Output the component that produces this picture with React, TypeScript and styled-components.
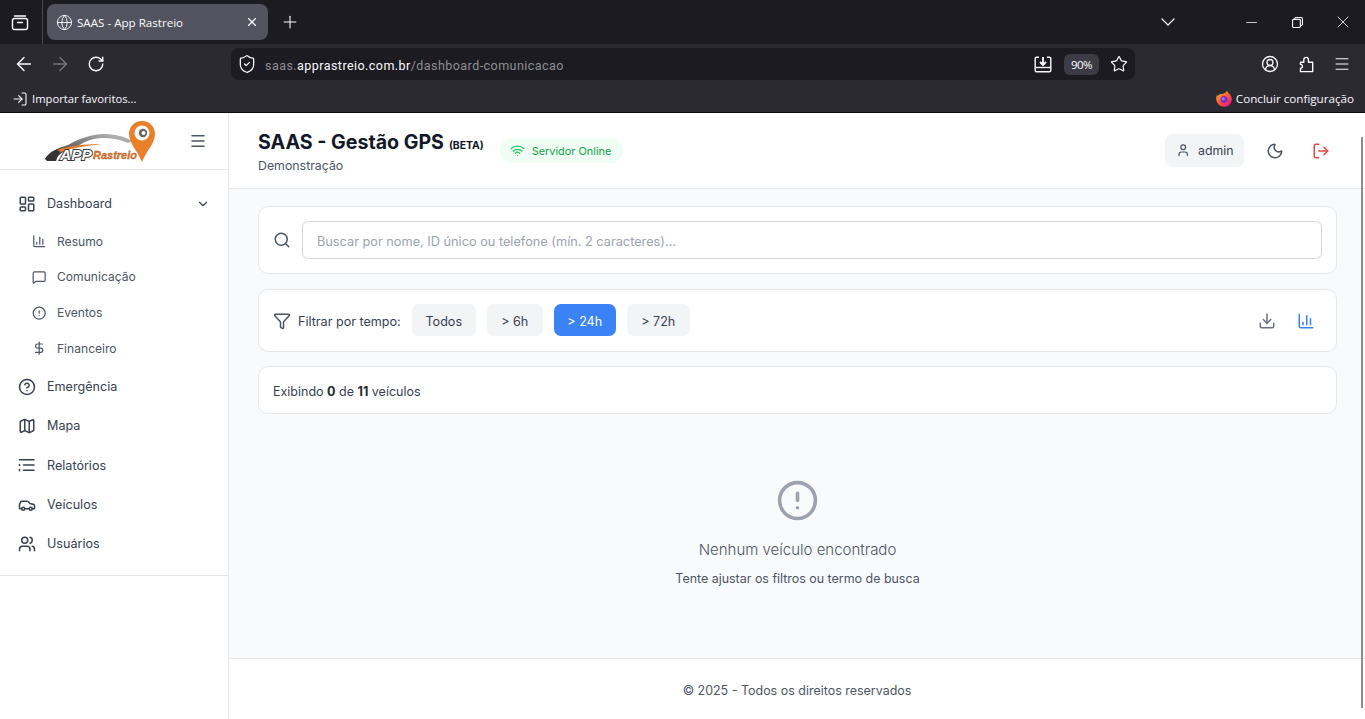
import React from "react";
import styled, { createGlobalStyle } from "styled-components";
import {
  ArrowLeft, ArrowRight, RotateCw, Globe, X, Plus, ChevronDown, Minus, Star, Menu,
  LayoutDashboard, ChartColumn, MessageSquare, CircleAlert, DollarSign, CircleHelp,
  Map as MapIcon, Car, Users, User, Moon, LogOut, Search, Funnel, Download, Wifi,
  CircleUserRound, LogIn, ShieldCheck,
} from "lucide-react";

const Global = createGlobalStyle`
  html, body { margin: 0; padding: 0; height: 100%; overflow: hidden; }
  body { font-family: Inter, "Liberation Sans", sans-serif; background: #fff; }
  * { box-sizing: border-box; }
`;

const Window = styled.div`
  width: 1365px;
  height: 719px;
  display: flex;
  flex-direction: column;
  position: relative;
  overflow: hidden;
`;

/* ---------- browser chrome ---------- */
const TabStrip = styled.div`
  height: 44px;
  background: #1c1b22;
  display: flex;
  align-items: center;
  color: #fbfbfe;
`;
const ViewSlot = styled.div`
  width: 43px;
  height: 44px;
  display: flex;
  align-items: center;
  justify-content: center;
  border-right: 1px solid #4a4a52;
  padding-right: 3px;
`;
const Tab = styled.div`
  width: 221px;
  height: 36px;
  margin-left: 4px;
  background: #53535f;
  border-radius: 8px;
  display: flex;
  align-items: center;
  padding: 0 9px 0 9px;
  gap: 4px;
  font: 11.6px "Open Sans", sans-serif;
  color: #fbfbfe;
`;
const TabTitle = styled.span`
  flex: 1;
`;
const NewTab = styled.div`
  width: 44px;
  display: flex;
  justify-content: center;
`;
const StripSpacer = styled.div`
  flex: 1;
`;
const WindowButton = styled.div<{ $w: number }>`
  width: ${(p) => p.$w}px;
  display: flex;
  justify-content: center;
  align-items: center;
`;
const NavBar = styled.div`
  height: 41px;
  background: #2b2a33;
  display: flex;
  align-items: center;
  color: #fbfbfe;
  padding: 0 0 1px 6px;
`;
const NavButton = styled.div<{ $dim?: boolean }>`
  width: 36px;
  display: flex;
  justify-content: center;
  color: ${(p) => (p.$dim ? "#77767c" : "#fbfbfe")};
`;
const UrlBar = styled.div`
  width: 904px;
  height: 32px;
  margin: 0 117px;
  background: #1c1b22;
  border-radius: 8px;
  display: flex;
  align-items: center;
  padding: 0 7px 0 6px;
  font: 12.5px Roboto, sans-serif;
  letter-spacing: 0.45px;
  color: #8f8f93;
`;
const UrlText = styled.div`
  flex: 1;
  margin-left: 8px;
  padding-top: 3px;
`;
const UrlHost = styled.span`
  color: #fbfbfe;
`;
const ZoomPill = styled.div`
  width: 35px;
  height: 21px;
  margin: 0 11px 0 12px;
  border-radius: 6px;
  background: #3d3c46;
  color: #fbfbfe;
  font: 11.5px "Open Sans", sans-serif;
  letter-spacing: -0.6px;
  display: flex;
  align-items: center;
  justify-content: center;
`;
const BookmarkBar = styled.div`
  height: 27px;
  background: #2b2a33;
  display: flex;
  align-items: center;
  justify-content: space-between;
  padding: 0 11px 0 12px;
  color: #fbfbfe;
`;
const Bookmark = styled.div<{ $size: number; $gap: number }>`
  display: flex;
  align-items: center;
  gap: ${(p) => p.$gap}px;
  font: ${(p) => p.$size}px "Open Sans", sans-serif;
`;
const ChromeEdge = styled.div`
  height: 1px;
  background: #0c0c0d;
`;

/* ---------- application ---------- */
const App_ = styled.div`
  flex: 1;
  min-height: 0;
  display: flex;
  background: #fff;
`;
const Sidebar = styled.aside`
  width: 229px;
  flex: none;
  border-right: 1px solid #e5e7eb;
  background: #fff;
`;
const SidebarHead = styled.div`
  height: 57px;
  border-bottom: 1px solid #e5e7eb;
  display: flex;
  align-items: center;
  padding: 0 21px 0 42px;
  justify-content: space-between;
  color: #4b5563;
`;
const Nav = styled.nav`
  padding: 14px 0 11.8px;
  border-bottom: 1px solid #e5e7eb;
  display: flex;
  flex-direction: column;
`;
const NavItem = styled.div`
  height: 39.3px;
  padding: 0 18px;
  display: flex;
  align-items: center;
  gap: 11px;
  font-size: 12.6px;
  color: #374151;
  svg { flex: none; color: #374151; }
`;
const NavLabel = styled.span`
  flex: 1;
`;
const SubList = styled.div`
  display: flex;
  flex-direction: column;
  padding-bottom: 0.5px;
`;
const SubItem = styled.div`
  height: 35.8px;
  padding-left: 32px;
  display: flex;
  align-items: center;
  gap: 10.6px;
  font-size: 12.1px;
  color: #4b5563;
  svg { flex: none; color: #4b5563; }
`;
const Content = styled.div`
  flex: 1;
  min-width: 0;
  display: flex;
  flex-direction: column;
  background: #f9fafb;
`;
const Header = styled.header`
  height: 76px;
  flex: none;
  background: #fff;
  border-bottom: 1px solid #e5e7eb;
  display: flex;
  align-items: center;
  padding: 0 35px 0 29px;
`;
const TitleBlock = styled.div`
  display: flex;
  flex-direction: column;
  margin-top: 2px;
`;
const Title = styled.h1`
  margin: 0;
  font-size: 19.6px;
  line-height: 26px;
  font-weight: 700;
  color: #111827;
  white-space: nowrap;
`;
const Beta = styled.span`
  font-size: 10.4px;
  font-weight: 700;
  margin-left: 5px;
`;
const Subtitle = styled.div`
  margin-top: -1px;
  font-size: 12.35px;
  line-height: 16px;
  color: #4b5563;
`;
const OnlineBadge = styled.div`
  margin: 0 0 0 16px;
  height: 25px;
  padding: 0 12px 0 10px;
  border-radius: 13px;
  background: #f0fdf4;
  color: #16a34a;
  font-size: 10.9px;
  display: flex;
  align-items: center;
  gap: 7px;
  svg { color: #22c55e; }
`;
const HeaderSpacer = styled.div`
  flex: 1;
`;
const AdminChip = styled.div`
  height: 33px;
  width: 79px;
  border-radius: 8px;
  background: #f3f4f6;
  color: #374151;
  font-size: 12.3px;
  display: flex;
  align-items: center;
  padding-left: 11px;
  gap: 7.6px;
  svg { color: #4b5563; }
`;
const HeaderIcon = styled.div<{ $color: string; $ml: number }>`
  margin-left: ${(p) => p.$ml}px;
  color: ${(p) => p.$color};
  display: flex;
`;
const Main = styled.main`
  flex: 1;
  min-height: 0;
  padding: 17px 28px 0 29px;
  display: flex;
  flex-direction: column;
`;
const Card = styled.section`
  background: #fff;
  border: 1px solid #e5e7eb;
  border-radius: 10px;
  display: flex;
  align-items: center;
  flex: none;
`;
const SearchCard = styled(Card)`
  height: 68px;
  padding: 0 14px;
  gap: 11px;
  svg { color: #4b5563; flex: none; }
`;
const SearchInput = styled.input`
  flex: 1;
  height: 38px;
  border: 1px solid #d1d5db;
  border-radius: 6px;
  padding: 2px 14px 0;
  font: 12.74px Inter, sans-serif;
  background: #fff;
  &::placeholder { color: #9ca3af; opacity: 1; }
`;
const FilterCard = styled(Card)`
  height: 63px;
  margin-top: 15px;
  padding: 0 21px 0 14px;
`;
const FilterLabel = styled.span`
  font-size: 12.6px;
  color: #374151;
  margin: 1px 11px 0 7px;
`;
const FilterButton = styled.button<{ $active?: boolean; $w: number }>`
  width: ${(p) => p.$w}px;
  height: 32px;
  margin: 0 11px 1px 0;
  border: 0;
  border-radius: 7px;
  font: 12.6px Inter, sans-serif;
  background: ${(p) => (p.$active ? "#3b82f6" : "#f3f4f6")};
  color: ${(p) => (p.$active ? "#fff" : "#374151")};
  padding: 3px 0 0;
`;
const ActionIcon = styled.div<{ $color: string; $ml: number }>`
  color: ${(p) => p.$color};
  margin-left: ${(p) => p.$ml}px;
  display: flex;
`;
const CountCard = styled(Card)`
  height: 48px;
  margin-top: 14px;
  padding: 2px 14px 0;
  font-size: 12.5px;
  color: #374151;
  gap: 4px;
  b { font-weight: 700; color: #1f2937; }
`;
const Empty = styled.div`
  flex: 1;
  display: flex;
  flex-direction: column;
  align-items: center;
  padding-top: 65px;
  color: #9ca3af;
`;
const EmptyTitle = styled.div`
  margin-top: 17px;
  font-size: 15px;
  line-height: 22px;
  font-weight: 300;
  color: #4b5563;
`;
const EmptyHint = styled.div`
  margin-top: 10px;
  font-size: 12.45px;
  line-height: 16px;
  color: #4b5563;
`;
const Footer = styled.footer`
  height: 61px;
  flex: none;
  background: #fff;
  border-top: 1px solid #e5e7eb;
  display: flex;
  align-items: center;
  justify-content: center;
  padding-top: 2px;
  font-size: 12.47px;
  color: #4b5563;
`;
const ScrollThumb = styled.div`
  position: absolute;
  right: 2px;
  top: 137px;
  width: 2px;
  height: 571px;
  background: #8c8c8c;
`;

const ViewIcon = () => (
  <svg width="18" height="18" viewBox="0 0 18 18" fill="none" stroke="#fbfbfe" strokeWidth="1.4">
    <rect x="1.5" y="5.5" width="15" height="11" rx="2" />
    <path d="M3.5 3h11M6.5 9.5h5" strokeLinecap="round" />
  </svg>
);
const RestoreIcon = () => (
  <svg width="11" height="11" viewBox="0 0 12 12" fill="none" stroke="#fbfbfe" strokeWidth="1.2">
    <rect x="0.6" y="2.6" width="8.5" height="8.8" rx="1" />
    <path d="M3 2.5V1.6a1 1 0 0 1 1-1h6a1.5 1.5 0 0 1 1.4 1.5v6a1 1 0 0 1-1 1H9" />
  </svg>
);
const TrayDownload = () => (
  <svg width="18" height="17" viewBox="0 0 18 17" fill="none" stroke="#fbfbfe" strokeWidth="1.4">
    <path d="M5 1.2H2.5a1.3 1.3 0 0 0-1.3 1.3v12a1.3 1.3 0 0 0 1.3 1.3h13a1.3 1.3 0 0 0 1.3-1.3v-12a1.3 1.3 0 0 0-1.3-1.3H13" />
    <path d="M1.2 11.5h15.6" />
    <path d="M9 1v6.5M6 6l3 3 3-3" strokeWidth="1.8" />
  </svg>
);
const PuzzleIcon = () => (
  <svg width="17" height="17" viewBox="0 0 17 17" fill="none" stroke="#fbfbfe" strokeWidth="1.4" strokeLinejoin="round">
    <path d="M2.5 6.2H5.8V3.7a2.3 2.3 0 0 1 4.6 0V6.2H14.7V15.6H2.5V12.3a1.95 1.95 0 0 0 0-3.9Z" />
  </svg>
);
const FirefoxLogo = () => (
  <svg width="16" height="17" viewBox="0 0 16 17">
    <defs>
      <linearGradient id="ff" x1="0" y1="0" x2="0.8" y2="1">
        <stop offset="0" stopColor="#ffbd2e" />
        <stop offset="0.55" stopColor="#ff5a36" />
        <stop offset="1" stopColor="#e31587" />
      </linearGradient>
    </defs>
    <path d="M11 0.5c0.4 2 2 2.6 3.4 4.6 1.4 2 1.6 4 1.3 5.6A7.9 7.9 0 0 1 8 16.8 7.9 7.9 0 0 1 0.2 9c0-1.6 0.4-3.2 1-4.2l0.6 1.5C2.6 4.5 4 3.8 5.6 4c2-0.3 4.6-1.2 5.4-3.5z" fill="url(#ff)" />
    <circle cx="8" cy="9.5" r="3.6" fill="#7b2fc9" />
    <circle cx="7.2" cy="8.8" r="1.6" fill="#b56ae8" />
  </svg>
);
const ReportIcon = ({ size = 18 }: { size?: number; strokeWidth?: number }) => (
  <svg width={size} height={size} viewBox="0 0 18 18" fill="none" stroke="currentColor" strokeWidth="1.5" strokeLinecap="round">
    <path d="M1.5 3.7h14.5M5.5 9h10.5M5.5 14.2h10.5M1.5 8.6v1M1.5 13.4v1.4" />
  </svg>
);
const Logo = () => (
  <svg width="118" height="46" viewBox="0 0 118 46" style={{ marginTop: 2 }}>
    <defs>
      <linearGradient id="sw" x1="0" y1="1" x2="1" y2="0">
        <stop offset="0" stopColor="#2d2d2d" />
        <stop offset="0.5" stopColor="#777" />
        <stop offset="1" stopColor="#c4c4c4" />
      </linearGradient>
    </defs>
    <path d="M3 40 C8 32 16 29 26 26 C38 19 50 15 62 15 C72 15 82 17 90 22 L86 24 C78 20 68 19 60 19 C50 19 42 23 36 27 C28 29 18 33 13 41 Z" fill="url(#sw)" />
    <path d="M3 40 C7 34 12 31 19 29 L14 42 H5 Z" fill="#333" />
    <path d="M15 31 C26 27 42 25 60 25 C44 27 30 29 19 33 Z" fill="#e8792b" />
    <path d="M100 2 C92 2 87 8 87 15 C87 24 95 31 100 43 C105 31 113 24 113 15 C113 8 108 2 100 2 Z" fill="#e8802a" />
    <circle cx="100" cy="14" r="7.5" fill="#fff" />
    <circle cx="101" cy="14" r="4.2" fill="#666" />
    <circle cx="101.5" cy="14" r="2" fill="#fff" />
    <text x="18" y="41" fontFamily="Liberation Sans, sans-serif" fontSize="15.5" fontWeight="700" fontStyle="italic" fill="#fff" stroke="#3a3a3a" strokeWidth="2" paintOrder="stroke">APP</text>
    <text x="51" y="40" fontFamily="Liberation Sans, sans-serif" fontSize="11" fontWeight="700" fontStyle="italic" fill="#e8792b" stroke="#8a4a1a" strokeWidth="0.3">Rastreio</text>
  </svg>
);

const subItems = [
  { label: "Resumo", Icon: ChartColumn },
  { label: "Comunicação", Icon: MessageSquare },
  { label: "Eventos", Icon: CircleAlert },
  { label: "Financeiro", Icon: DollarSign },
];
const mainItems = [
  { label: "Emergência", Icon: CircleHelp },
  { label: "Mapa", Icon: MapIcon },
  { label: "Relatórios", Icon: ReportIcon },
  { label: "Veículos", Icon: Car },
  { label: "Usuários", Icon: Users },
];
const filters = [
  { label: "Todos", w: 64 },
  { label: "> 6h", w: 56 },
  { label: "> 24h", w: 62, active: true },
  { label: "> 72h", w: 63 },
];

export default function App() {
  return (
    <Window>
      <Global />
      <TabStrip>
        <ViewSlot><ViewIcon /></ViewSlot>
        <Tab>
          <Globe size={17} strokeWidth={1.3} />
          <TabTitle>SAAS - App Rastreio</TabTitle>
          <X size={14} strokeWidth={2} />
        </Tab>
        <NewTab><Plus size={20} strokeWidth={1.3} /></NewTab>
        <StripSpacer />
        <WindowButton $w={46}><ChevronDown size={24} strokeWidth={1.2} /></WindowButton>
        <WindowButton $w={37} />
        <WindowButton $w={46}><Minus size={17} strokeWidth={1.1} /></WindowButton>
        <WindowButton $w={46}><RestoreIcon /></WindowButton>
        <WindowButton $w={45}><X size={20} strokeWidth={1} /></WindowButton>
      </TabStrip>
      <NavBar>
        <NavButton><ArrowLeft size={22} strokeWidth={1.5} /></NavButton>
        <NavButton $dim><ArrowRight size={22} strokeWidth={1.5} /></NavButton>
        <NavButton><RotateCw size={18} strokeWidth={1.8} /></NavButton>
        <UrlBar>
          <ShieldCheck size={20} strokeWidth={1.5} color="#fbfbfe" />
          <UrlText>saas.<UrlHost>apprastreio.com.br</UrlHost>/dashboard-comunicacao</UrlText>
          <TrayDownload />
          <ZoomPill>90%</ZoomPill>
          <Star size={18} strokeWidth={1.6} color="#fbfbfe" />
        </UrlBar>
        <NavButton><CircleUserRound size={18} strokeWidth={1.7} /></NavButton>
        <NavButton><PuzzleIcon /></NavButton>
        <NavButton><Menu size={18} strokeWidth={1.4} /></NavButton>
      </NavBar>
      <BookmarkBar>
        <Bookmark $size={11.25} $gap={4}><LogIn size={16} strokeWidth={1.6} />Importar favoritos...</Bookmark>
        <Bookmark $size={11.65} $gap={4}><FirefoxLogo />Concluir configuração</Bookmark>
      </BookmarkBar>
      <ChromeEdge />
      <App_>
        <Sidebar>
          <SidebarHead>
            <Logo />
            <Menu size={18} strokeWidth={2} />
          </SidebarHead>
          <Nav>
            <NavItem>
              <LayoutDashboard size={18} />
              <NavLabel>Dashboard</NavLabel>
              <ChevronDown size={14} />
            </NavItem>
            <SubList>
              {subItems.map(({ label, Icon }) => (
                <SubItem key={label}>
                  <Icon size={14.4} />
                  {label}
                </SubItem>
              ))}
            </SubList>
            {mainItems.map(({ label, Icon }) => (
              <NavItem key={label}>
                <Icon size={18} />
                <NavLabel>{label}</NavLabel>
              </NavItem>
            ))}
          </Nav>
        </Sidebar>
        <Content>
          <Header>
            <TitleBlock>
              <Title>SAAS - Gestão GPS<Beta>(BETA)</Beta></Title>
              <Subtitle>Demonstração</Subtitle>
            </TitleBlock>
            <OnlineBadge><Wifi size={15} strokeWidth={2} />Servidor Online</OnlineBadge>
            <HeaderSpacer />
            <AdminChip><User size={14.4} />admin</AdminChip>
            <HeaderIcon $color="#4b5563" $ml={22}><Moon size={18} /></HeaderIcon>
            <HeaderIcon $color="#ef4444" $ml={28}><LogOut size={18} /></HeaderIcon>
          </Header>
          <Main>
            <SearchCard>
              <Search size={18} />
              <SearchInput placeholder="Buscar por nome, ID único ou telefone (mín. 2 caracteres)..." readOnly />
            </SearchCard>
            <FilterCard>
              <Funnel size={18} color="#4b5563" />
              <FilterLabel>Filtrar por tempo:</FilterLabel>
              {filters.map((f) => (
                <FilterButton key={f.label} $active={f.active} $w={f.w}>{f.label}</FilterButton>
              ))}
              <HeaderSpacer />
              <ActionIcon $color="#6b7280" $ml={0}><Download size={18} /></ActionIcon>
              <ActionIcon $color="#3b82f6" $ml={21}><ChartColumn size={18} /></ActionIcon>
            </FilterCard>
            <CountCard>
              <span>Exibindo <b>0</b> de <b>11</b> veículos</span>
            </CountCard>
            <Empty>
              <CircleAlert size={43} strokeWidth={2} />
              <EmptyTitle>Nenhum veículo encontrado</EmptyTitle>
              <EmptyHint>Tente ajustar os filtros ou termo de busca</EmptyHint>
            </Empty>
          </Main>
          <Footer>© 2025 - Todos os direitos reservados</Footer>
        </Content>
      </App_>
      <ScrollThumb />
    </Window>
  );
}
